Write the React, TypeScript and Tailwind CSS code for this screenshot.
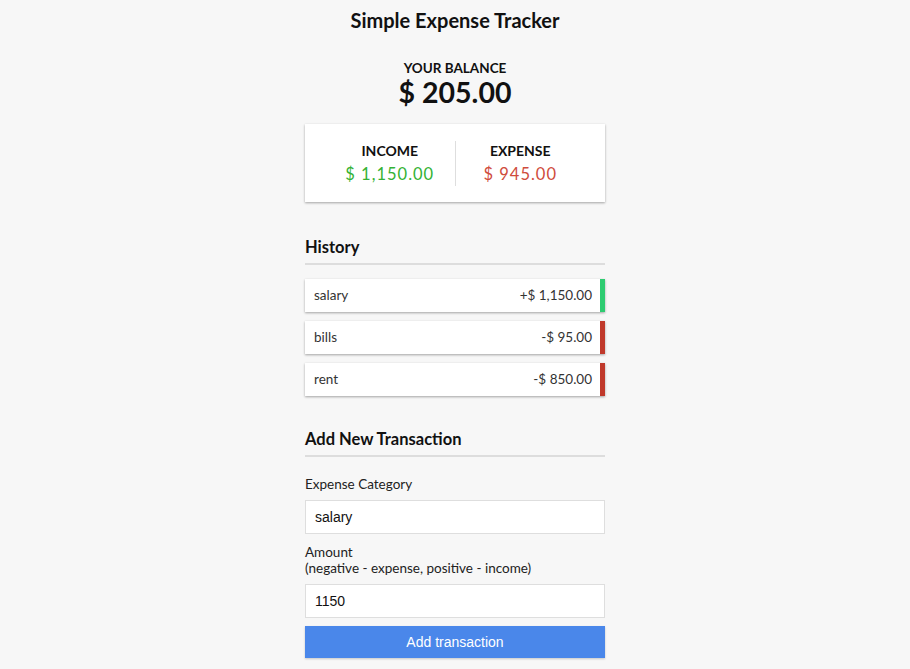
const history = [
  { id: 1, text: 'salary', amount: '+$ 1,150.00', plus: true },
  { id: 2, text: 'bills', amount: '-$ 95.00', plus: false },
  { id: 3, text: 'rent', amount: '-$ 850.00', plus: false },
]

export default function App() {
  return (
    <div className="min-h-[669px] bg-[#f7f7f7] font-['Lato','Open_Sans',sans-serif] text-[#111]">
      <div className="mx-auto flex w-[300px] flex-col pt-[8px]">
        <h2 className="text-center text-[20px] font-bold leading-[24px]">Simple Expense Tracker</h2>

        <h4 className="mt-[27px] text-center text-[13.5px] font-bold uppercase leading-[18px]">Your Balance</h4>
        <h1 className="text-center text-[28.5px] font-bold leading-[30px]">$ 205.00</h1>

        <div className="mt-[17px] flex h-[78px] items-center bg-white px-[20px] shadow-[0_1px_3px_rgba(0,0,0,0.12),0_1px_2px_rgba(0,0,0,0.24)]">
          <div className="flex flex-1 flex-col items-center border-r border-[#dedede] py-[1px]">
            <h4 className="text-[14px] font-bold uppercase leading-[18px]">Income</h4>
            <p className="mt-[3px] text-[16.5px] leading-[22px] tracking-[1px] text-[#34b234]">$ 1,150.00</p>
          </div>
          <div className="flex flex-1 flex-col items-center py-[1px]">
            <h4 className="text-[14px] font-bold uppercase leading-[18px]">Expense</h4>
            <p className="mt-[3px] text-[16.5px] leading-[22px] tracking-[1px] text-[#cf4c3c]">$ 945.00</p>
          </div>
        </div>

        <h3 className="mt-[35px] border-b-2 border-[#dddddd] pb-[6px] text-[16.5px] font-bold leading-[20px]">History</h3>
        <ul className="mt-[14px] flex flex-col gap-[9px]">
          {history.map(item => (
            <li
              key={item.id}
              className={`flex h-[33px] items-center justify-between border-r-[5px] bg-white pl-[9px] pr-[8px] text-[13.5px] text-[#333] shadow-[0_1px_3px_rgba(0,0,0,0.12),0_1px_2px_rgba(0,0,0,0.24)] ${
                item.plus ? 'border-[#2ecc71]' : 'border-[#c0392b]'
              }`}
            >
              <span>{item.text}</span>
              <span>{item.amount}</span>
            </li>
          ))}
        </ul>

        <h3 className="mt-[33px] border-b-2 border-[#dddddd] pb-[6px] text-[16.5px] font-bold leading-[20px]">Add New Transaction</h3>
        <form className="flex flex-col">
          <label className="mt-[19px] text-[13.5px] leading-[16px] text-[#222]">Expense Category</label>
          <input
            readOnly
            value="salary"
            className="mt-[8px] h-[34px] border border-[#dedede] bg-white px-[9px] font-['Liberation_Sans',Arial,sans-serif] text-[14px] text-[#111] outline-none"
          />
          <label className="mt-[10px] text-[13.5px] leading-[16px] text-[#222]">
            Amount
            <br />
            (negative - expense, positive - income)
          </label>
          <input
            readOnly
            value="1150"
            className="mt-[8px] h-[34px] border border-[#dedede] bg-white px-[9px] font-['Liberation_Sans',Arial,sans-serif] text-[14px] text-[#111] outline-none"
          />
          <button
            type="button"
            className="mt-[8px] h-[32px] bg-[#4a87ea] font-['Liberation_Sans',Arial,sans-serif] text-[14px] text-white shadow-[0_1px_2px_rgba(0,0,0,0.2)]"
          >
            Add transaction
          </button>
        </form>
      </div>
    </div>
  )
}
